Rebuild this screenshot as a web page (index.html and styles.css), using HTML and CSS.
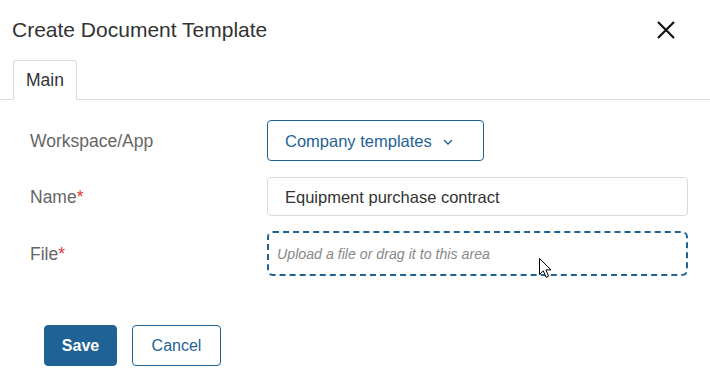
FILE: index.html
```html
<!DOCTYPE html>
<html lang="en">
<head>
<meta charset="utf-8">
<title>Create Document Template</title>
<link rel="stylesheet" href="styles.css">
</head>
<body>
<div class="dialog">
  <header class="header">
    <h1 class="title">Create Document Template</h1>
    <button class="close" aria-label="Close">
      <svg width="18" height="18" viewBox="0 0 18 18"><path d="M1 1L17 17M17 1L1 17" stroke="#111" stroke-width="2.2" fill="none"/></svg>
    </button>
  </header>
  <nav class="tabs">
    <div class="tab">Main</div>
  </nav>
  <form class="form">
    <label class="label">Workspace/App</label>
    <div class="control">
      <button type="button" class="select">Company templates
        <svg class="chev" width="10" height="6" viewBox="0 0 10 6"><path d="M1 1L5 5L9 1" stroke="#1f6396" stroke-width="1.3" fill="none"/></svg>
      </button>
    </div>
    <label class="label">Name<span class="req">*</span></label>
    <div class="control">
      <div class="input">Equipment purchase contract</div>
    </div>
    <label class="label">File<span class="req">*</span></label>
    <div class="control">
      <div class="drop">Upload a file or drag it to this area
        <svg class="cursor" width="16" height="22" viewBox="0 0 16 22"><path d="M1.5 1.5V17.5L5.3 13.9L8.1 20.3L10.6 19.2L7.9 12.9L13 12.9Z" fill="#fff" stroke="#000" stroke-width="1"/></svg>
      </div>
    </div>
  </form>
  <footer class="footer">
    <button class="btn primary">Save</button>
    <button class="btn secondary">Cancel</button>
  </footer>
</div>
</body>
</html>
```

FILE: styles.css
```css
* { box-sizing: border-box; }
html, body { margin: 0; padding: 0; background: #fff; }
body { font-family: "Liberation Sans", Arial, sans-serif; color: #333; }
.dialog { width: 710px; height: 379px; }
.header { display: flex; align-items: center; justify-content: space-between; height: 60px; padding: 0 35px 0 12px; }
.title { margin: 0; font-size: 21px; font-weight: 400; color: #333; }
.close { border: 0; background: none; padding: 0; width: 18px; height: 18px; display: flex; cursor: pointer; }
.tabs { display: flex; padding-left: 13px; border-bottom: 1px solid #dcdcdc; height: 40px; }
.tab { width: 64px; height: 40px; margin-bottom: -1px; border: 1px solid #dcdcdc; border-bottom-color: #fff; border-radius: 3px 3px 0 0; background: #fff; display: flex; align-items: center; justify-content: center; font-size: 17.5px; color: #333; }
.form { display: grid; grid-template-columns: 237px 421px; row-gap: 16px; padding: 20px 0 0 30px; align-items: center; }
.label { font-size: 17.5px; color: #666; padding-top: 1px; }
.req { color: #e53935; }
.select { height: 41px; width: 217px; border: 1px solid #1f6396; border-radius: 4px; background: #fff; color: #1f6396; font-family: inherit; font-size: 16.5px; display: flex; align-items: center; padding: 1px 0 0 17px; gap: 11px; cursor: pointer; }
.chev { margin-top: 1px; }
.input { height: 39px; border: 1px solid #dadada; border-radius: 4px; display: flex; align-items: center; padding: 1px 0 0 17px; font-size: 16.5px; color: #333; }
.drop { position: relative; height: 45px; border: 2px dashed #1f6396; border-radius: 6px; display: flex; align-items: center; padding: 1px 0 0 8px; font-size: 14.2px; font-style: italic; color: #888; margin-top: -1px; }
.cursor { position: absolute; left: 269px; top: 24px; }
.footer { display: flex; gap: 15px; padding: 49px 0 0 44px; }
.btn { height: 41px; border-radius: 4px; font-family: inherit; font-size: 16px; cursor: pointer; padding: 1px 0 0; }
.primary { width: 73px; background: #1f6396; border: 1px solid #1f6396; color: #fff; font-weight: 700; }
.secondary { width: 89px; background: #fff; border: 1px solid #1f6396; color: #1f6396; }
```
